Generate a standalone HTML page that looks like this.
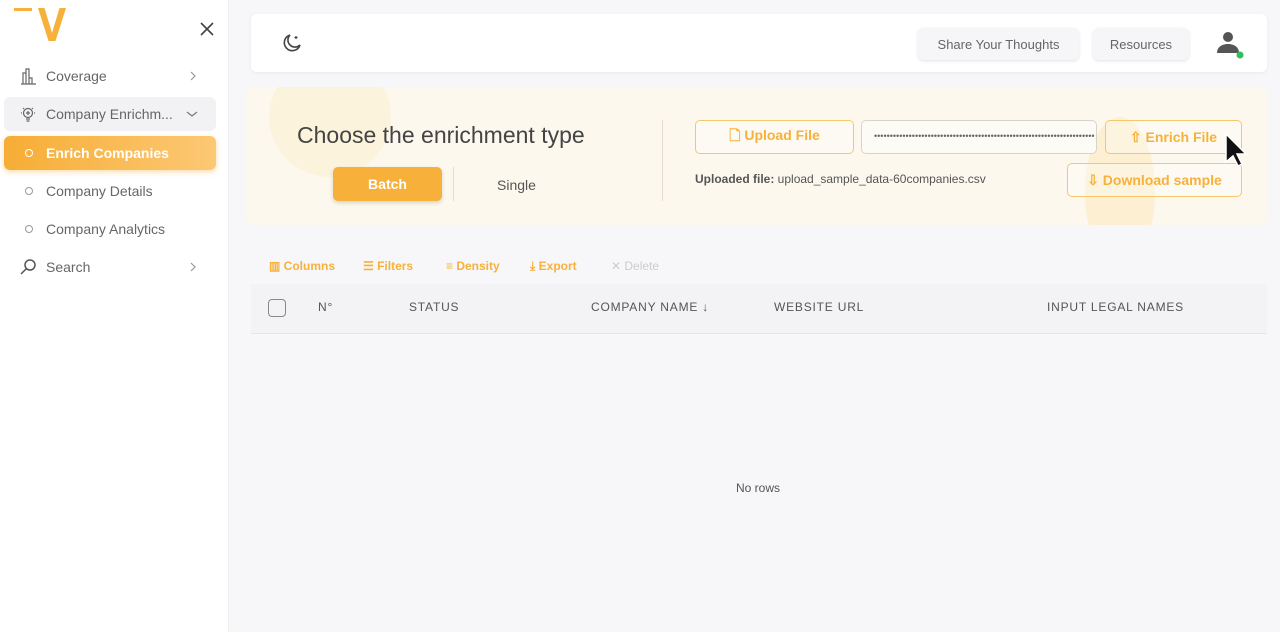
<!DOCTYPE html>
<html><head><meta charset="utf-8"><style>
*{box-sizing:border-box;margin:0;padding:0}
body{width:1280px;height:632px;overflow:hidden;background:#f7f7f9;font-family:"Liberation Sans",sans-serif;position:relative;color:#555}
.side{position:absolute;left:0;top:0;width:229px;height:632px;background:#fff;border-right:1px solid #eee}
.nav{position:absolute;left:4px;width:212px;height:34px;display:flex;align-items:center;font-size:14px;color:#666;border-radius:6px}
.nav .ic{width:42px;display:flex;justify-content:center;padding-left:6px}
.nav .chev{position:absolute;right:18px;top:12px}
.dot{width:8px;height:8px;border:1.3px solid #999;border-radius:50%}
.card{position:absolute;left:251px;top:14px;width:1016px;height:58px;background:#fff;border-radius:6px;box-shadow:0 1px 4px rgba(0,0,0,.06)}
.hbtn{position:absolute;top:14px;height:32px;background:#f6f6f8;border-radius:6px;box-shadow:0 1px 3px rgba(0,0,0,.12);font-size:13px;color:#666;display:flex;align-items:center;justify-content:center}
.panel{position:absolute;left:245px;top:87px;width:1022px;height:138px;background:#fcf8ee;border-radius:8px;overflow:hidden}
.ob{position:absolute;height:34px;border:1px solid #f6c66e;border-radius:5px;color:#f7b13a;font-size:14px;font-weight:bold;display:flex;align-items:center;justify-content:center;gap:8px;background:rgba(255,255,255,.3)}
.tb{position:absolute;top:259px;font-size:12px;color:#f7b13a;font-weight:bold;display:flex;align-items:center;gap:6px}
.th{position:absolute;top:300px;font-size:12px;letter-spacing:.8px;color:#555}
</style></head><body>
<div class="side">
  <svg style="position:absolute;left:12px;top:6px" width="60" height="38" viewBox="0 0 60 38"><rect x="2" y="2" width="18" height="3" fill="#f7b13a"/><path d="M26 2h6.5l7.5 25 7.5-25H54L43.5 35h-7z" fill="#f7b13a"/></svg>
  <svg style="position:absolute;left:200px;top:22px" width="14" height="14" viewBox="0 0 14 14" stroke="#444" stroke-width="1.6"><path d="M1 1l12 12M13 1L1 13"/></svg>
  <div class="nav" style="top:59px"><span class="ic"><svg width="18" height="18" viewBox="0 0 18 18" fill="none" stroke="#666" stroke-width="1.2"><path d="M2 17h15M4 17V6h3v11M7 17V2h3v15M10 17v-6h3v6"/></svg></span>Coverage<svg class="chev" width="10" height="10" viewBox="0 0 10 10" fill="none" stroke="#999" stroke-width="1.2"><path d="M3 1l4 4-4 4"/></svg></div>
  <div class="nav" style="top:97px;background:#f2f2f5"><span class="ic"><svg width="18" height="18" viewBox="0 0 18 18" fill="none" stroke="#666" stroke-width="1.2"><circle cx="9" cy="8" r="4.5"/><path d="M7 14h4M7.5 16h3M9 6v4M7 8h4M2 8h1M15 8h1M4 3l1 1M14 3l-1 1"/></svg></span>Company Enrichm...<svg class="chev" width="12" height="10" viewBox="0 0 12 10" fill="none" stroke="#777" stroke-width="1.2"><path d="M1 3l5 4 5-4"/></svg></div>
  <div class="nav" style="top:136px;background:linear-gradient(90deg,#f7ad35,#fcc874);color:#fff;font-weight:bold;box-shadow:0 2px 6px rgba(247,173,53,.4)"><span class="ic" style="padding-left:8px"><span class="dot" style="border-color:#fff"></span></span>Enrich Companies</div>
  <div class="nav" style="top:174px"><span class="ic" style="padding-left:8px"><span class="dot"></span></span>Company Details</div>
  <div class="nav" style="top:212px"><span class="ic" style="padding-left:8px"><span class="dot"></span></span>Company Analytics</div>
  <div class="nav" style="top:250px"><span class="ic"><svg width="18" height="18" viewBox="0 0 18 18" fill="none" stroke="#555" stroke-width="1.5"><circle cx="11" cy="7" r="5"/><path d="M7.5 10.5L2 16"/></svg></span>Search<svg class="chev" width="10" height="10" viewBox="0 0 10 10" fill="none" stroke="#999" stroke-width="1.2"><path d="M3 1l4 4-4 4"/></svg></div>
</div>
<div class="card">
  <svg style="position:absolute;left:30px;top:18px" width="22" height="22" viewBox="0 0 22 22" fill="none" stroke="#444" stroke-width="1.6"><path d="M9 3a8 8 0 1 0 10 10A7 7 0 0 1 9 3z"/><path d="M15 4v3M13.5 5.5h3" stroke-width="1.2"/></svg>
  <div class="hbtn" style="left:667px;width:161px">Share Your Thoughts</div>
  <div class="hbtn" style="left:842px;width:96px">Resources</div>
  <svg style="position:absolute;left:963px;top:15px" width="30" height="30" viewBox="0 0 30 30"><circle cx="14" cy="8" r="5" fill="#555"/><path d="M3 24c0-6 5-9 11-9s11 3 11 9z" fill="#555"/><circle cx="26" cy="26" r="3.5" fill="#2ec060"/></svg>
</div>
<div class="panel">
  <div style="position:absolute;left:24px;top:-30px;width:122px;height:120px;border-radius:50%;background:#fbf0d0;opacity:.6"></div>
  <div style="position:absolute;left:840px;top:30px;width:70px;height:150px;border-radius:50%;background:#fdeecb;opacity:.8"></div>
  <div style="position:absolute;left:52px;top:35px;font-size:23px;color:#444">Choose the enrichment type</div>
  <div style="position:absolute;left:88px;top:80px;width:109px;height:34px;background:#f7b13a;border-radius:5px;color:#fff;font-size:14px;font-weight:bold;display:flex;align-items:center;justify-content:center;box-shadow:0 2px 4px rgba(0,0,0,.15)">Batch</div>
  <div style="position:absolute;left:208px;top:80px;width:1px;height:34px;background:#ddd"></div>
  <div style="position:absolute;left:252px;top:90px;font-size:14px;color:#555">Single</div>
  <div style="position:absolute;left:417px;top:33px;width:1px;height:81px;background:#e2ddd0"></div>
  <div class="ob" style="left:450px;top:33px;width:159px">🗋 Upload File</div>
  <div style="position:absolute;left:616px;top:33px;width:236px;height:34px;border:1px solid #d9d4c8;border-radius:5px;background:#fdfbf6;font-size:9px;color:#666;padding:10px 12px;overflow:hidden;white-space:nowrap;letter-spacing:0">••••••••••••••••••••••••••••••••••••••••••••••••••••••••••••••••••••••</div>
  <div class="ob" style="left:860px;top:33px;width:137px">⇧ Enrich File</div>
  <div style="position:absolute;left:450px;top:85px;font-size:12px;color:#555"><b>Uploaded file:</b> upload_sample_data-60companies.csv</div>
  <div class="ob" style="left:822px;top:76px;width:175px">⇩ Download sample</div>
</div>
<svg style="position:absolute;left:1224px;top:132px" width="26" height="36" viewBox="0 0 26 36"><path d="M2 2v28l7-6 5 10 4-2-5-10h9z" fill="#111" stroke="#fff" stroke-width="1.5"/></svg>
<div class="tb" style="left:269px">▥ Columns</div>
<div class="tb" style="left:363px">☰ Filters</div>
<div class="tb" style="left:446px">≡ Density</div>
<div class="tb" style="left:530px">⤓ Export</div>
<div class="tb" style="left:611px;color:#ccc;font-weight:normal">✕ Delete</div>
<div style="position:absolute;left:251px;top:284px;width:1016px;height:50px;background:#f3f3f5;border-bottom:1px solid #e5e5e8"></div>
<div style="position:absolute;left:268px;top:299px;width:18px;height:18px;border:1.5px solid #888;border-radius:4px"></div>
<div class="th" style="left:318px">N°</div>
<div class="th" style="left:409px">STATUS</div>
<div class="th" style="left:591px">COMPANY NAME ↓</div>
<div class="th" style="left:774px">WEBSITE URL</div>
<div class="th" style="left:1047px">INPUT LEGAL NAMES</div>
<div style="position:absolute;left:736px;top:481px;font-size:12px;color:#555">No rows</div>
</body></html>
